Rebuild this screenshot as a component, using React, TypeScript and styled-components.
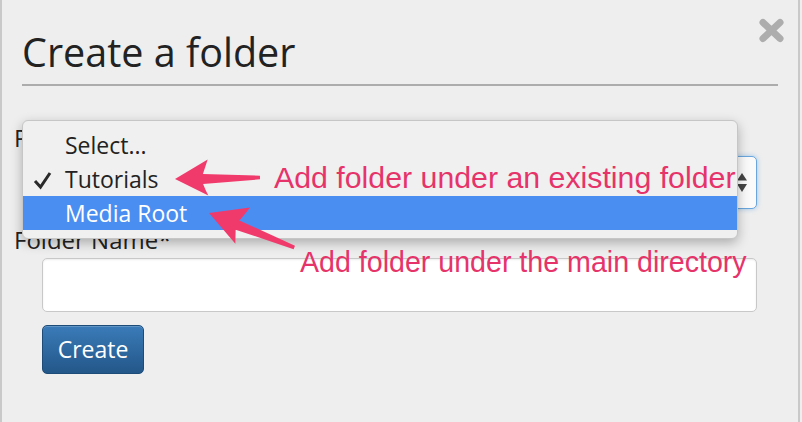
import styled, { createGlobalStyle } from "styled-components";

const GlobalStyle = createGlobalStyle`
  html, body {
    margin: 0;
    padding: 0;
    background: #eeeeee;
  }
  body {
    font-family: "Open Sans", "Liberation Sans", sans-serif;
    color: #222;
  }
`;

const Page = styled.div`
  position: relative;
  width: 796px;
  height: 422px;
  border-left: 2px solid #c9c9c9;
  border-right: 2px solid #c9c9c9;
  background: #eeeeee;
  overflow: hidden;
`;

const Header = styled.div`
  margin: 0 20px;
  padding: 30px 0 9px;
  border-bottom: 2px solid #acacac;
`;

const Title = styled.h1`
  margin: 0;
  font-size: 39.5px;
  line-height: 45px;
  font-weight: 400;
  color: #222;
`;

const CloseButton = styled.button`
  position: absolute;
  top: 18px;
  left: 756px;
  width: 27px;
  height: 25px;
  padding: 0;
  border: 0;
  background: none;
  display: flex;
`;

const Form = styled.form`
  margin-top: 38px;
  padding-left: 12px;
  display: flex;
  flex-direction: column;
  gap: 17px;
`;

const Group = styled.div`
  display: flex;
  flex-direction: column;
`;

const Label = styled.label`
  font-size: 24px;
  line-height: 28px;
  margin-bottom: 4px;
  color: #222;
`;

const SelectBox = styled.div`
  margin-left: 28px;
  width: 715px;
  height: 53px;
  box-sizing: border-box;
  background: #fafafa;
  border: 1px solid #6aa6dc;
  border-radius: 5px;
  box-shadow: 0 0 5px rgba(102, 170, 230, 0.6);
  display: flex;
  align-items: center;
  justify-content: flex-end;
  padding-right: 9px;
`;

const TextInput = styled.input`
  margin-left: 28px;
  width: 715px;
  height: 54px;
  box-sizing: border-box;
  background: #fff;
  border: 1px solid #c8c8c8;
  border-radius: 5px;
  box-shadow: inset 0 1px 2px rgba(0, 0, 0, 0.08);
  outline: none;
`;

const SubmitButton = styled.button`
  margin-left: 28px;
  margin-top: -4px;
  width: 102px;
  height: 49px;
  border: 1px solid #1d4c79;
  border-radius: 5px;
  background: linear-gradient(#3a7bb8, #235789);
  color: #fff;
  font-family: "Open Sans", "Liberation Sans", sans-serif;
  font-size: 23px;
  line-height: 1;
  padding: 0;
  box-shadow: inset 0 1px 0 rgba(255, 255, 255, 0.2);
`;

const Menu = styled.ul`
  position: absolute;
  left: 20px;
  top: 120px;
  width: 716px;
  margin: 0;
  padding: 7px 0 8px;
  list-style: none;
  background: #f0f0f0;
  border: 1px solid #c6c6c6;
  border-radius: 6px;
  box-sizing: border-box;
  box-shadow: 0 4px 12px rgba(0, 0, 0, 0.28);
  overflow: hidden;
`;

const MenuItem = styled.li<{ $active?: boolean }>`
  position: relative;
  height: 34px;
  line-height: 34px;
  padding-left: 42px;
  font-size: 23px;
  color: ${({ $active }) => ($active ? "#fff" : "#222")};
  background: ${({ $active }) => ($active ? "#4b8ef2" : "transparent")};
`;

const Check = styled.svg`
  position: absolute;
  left: 10px;
  top: 8px;
`;

const Overlay = styled.div`
  position: absolute;
  left: -2px;
  top: 0;
  width: 802px;
  height: 422px;
  pointer-events: none;
`;

const Note = styled.span<{ $x: number; $y: number; $size: number }>`
  position: absolute;
  left: ${({ $x }) => $x}px;
  top: ${({ $y }) => $y}px;
  font-family: "Liberation Sans", Arial, sans-serif;
  font-size: ${({ $size }) => $size}px;
  line-height: 29px;
  color: #e6336a;
  white-space: nowrap;
`;

const Arrows = styled.svg`
  position: absolute;
  left: 0;
  top: 0;
`;

function Arrow({ x, y, angle, length, barb }: { x: number; y: number; angle: number; length: number; barb: number }) {
  const d = `M0,0 L${barb},${-barb * 0.57} Q${barb - 3},${-10} ${barb - 5},-4.5 L${length},-1.8 L${length},1.8 L${barb - 5},5.5 Q${barb - 3},11 ${barb},${barb * 0.52} Z`;
  return <path d={d} fill="#f13a6c" transform={`translate(${x},${y}) rotate(${angle})`} />;
}

export default function App() {
  return (
    <>
      <GlobalStyle />
      <Page>
        <Header>
          <Title>Create a folder</Title>
        </Header>
        <CloseButton aria-label="Close">
          <svg width="27" height="25" viewBox="0 0 27 25">
            <path d="M5,4.5 L22,20.5 M22,4.5 L5,20.5" stroke="#adadad" strokeWidth="7" strokeLinecap="round" />
          </svg>
        </CloseButton>

        <Form onSubmit={(e) => e.preventDefault()}>
          <Group>
            <Label>Parent Folder*</Label>
            <SelectBox>
              <svg width="10" height="19" viewBox="0 0 10 19">
                <path d="M5,0 L10,7.5 L0,7.5 Z M0,11 L10,11 L5,19 Z" fill="#444" />
              </svg>
            </SelectBox>
          </Group>
          <Group>
            <Label>Folder Name*</Label>
            <TextInput />
          </Group>
          <SubmitButton type="submit">Create</SubmitButton>
        </Form>

        <Menu>
          <MenuItem>Select...</MenuItem>
          <MenuItem>
            <Check width="20" height="20" viewBox="0 0 20 20">
              <path d="M2,11 L7.5,17 L17,3" fill="none" stroke="#2a2a2a" strokeWidth="3" />
            </Check>
            Tutorials
          </MenuItem>
          <MenuItem $active>Media Root</MenuItem>
        </Menu>

        <Overlay>
          <Arrows width="802" height="422">
            <Arrow x={175} y={179} angle={-1} length={85} barb={33} />
            <Arrow x={209} y={213} angle={22} length={92} barb={36} />
          </Arrows>
          <Note $x={274} $y={163} $size={30.3}>Add folder under an existing folder</Note>
          <Note $x={300} $y={248} $size={28.6}>Add folder under the main directory</Note>
        </Overlay>
      </Page>
    </>
  );
}
